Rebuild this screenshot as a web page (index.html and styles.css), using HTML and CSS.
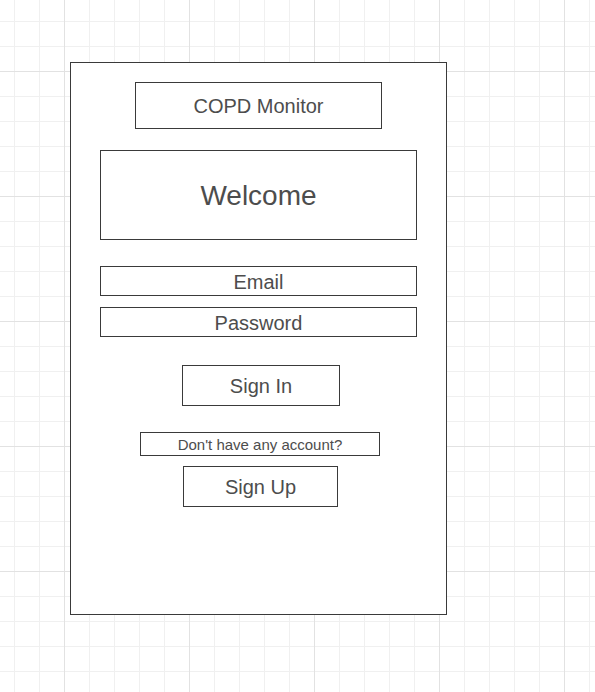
FILE: index.html
```html
<!DOCTYPE html>
<html>
<head>
<meta charset="utf-8">
<link rel="stylesheet" href="styles.css">
</head>
<body>
<div class="frame">
  <div class="box title">COPD Monitor</div>
  <div class="box welcome">Welcome</div>
  <div class="box field email">Email</div>
  <div class="box field password">Password</div>
  <div class="box btn signin">Sign In</div>
  <div class="box note">Don't have any account?</div>
  <div class="box btn signup">Sign Up</div>
</div>
</body>
</html>
```

FILE: styles.css
```css
html, body {
  margin: 0;
  padding: 0;
}
body {
  width: 595px;
  height: 692px;
  overflow: hidden;
  box-sizing: border-box;
  padding: 62px 0 0 70px;
  background-color: #ffffff;
  background-image:
    linear-gradient(to right, #e2e2e2 1px, transparent 1px),
    linear-gradient(to bottom, #e2e2e2 1px, transparent 1px),
    linear-gradient(to right, #f0f0f0 1px, transparent 1px),
    linear-gradient(to bottom, #f0f0f0 1px, transparent 1px);
  background-size: 125px 125px, 125px 125px, 25px 25px, 25px 25px;
  background-position: 64px 71px, 64px 71px, 14px 21px, 14px 21px;
  font-family: "Liberation Sans", Arial, sans-serif;
  color: #4d4d4d;
}
.frame {
  box-sizing: border-box;
  width: 377px;
  height: 553px;
  border: 1px solid #3a3a3a;
  background: #ffffff;
  display: flex;
  flex-direction: column;
  align-items: flex-start;
}
.box {
  box-sizing: border-box;
  border: 1px solid #3a3a3a;
  display: flex;
  align-items: center;
  justify-content: center;
  white-space: nowrap;
  line-height: 1;
}
.title {
  width: 247px;
  height: 47px;
  margin: 19px 0 0 64px;
  font-size: 20px;
}
.welcome {
  width: 317px;
  height: 90px;
  margin: 21px 0 0 29px;
  font-size: 28px;
  padding-top: 2px;
}
.field {
  width: 317px;
  height: 30px;
  margin-left: 29px;
  font-size: 20px;
  padding-top: 2px;
}
.email {
  margin-top: 26px;
}
.password {
  margin-top: 11px;
}
.btn {
  height: 41px;
  font-size: 20px;
}
.signin {
  width: 158px;
  margin: 28px 0 0 111px;
}
.note {
  width: 240px;
  height: 24px;
  margin: 26px 0 0 69px;
  font-size: 15px;
}
.signup {
  width: 155px;
  margin: 10px 0 0 112px;
}
```
